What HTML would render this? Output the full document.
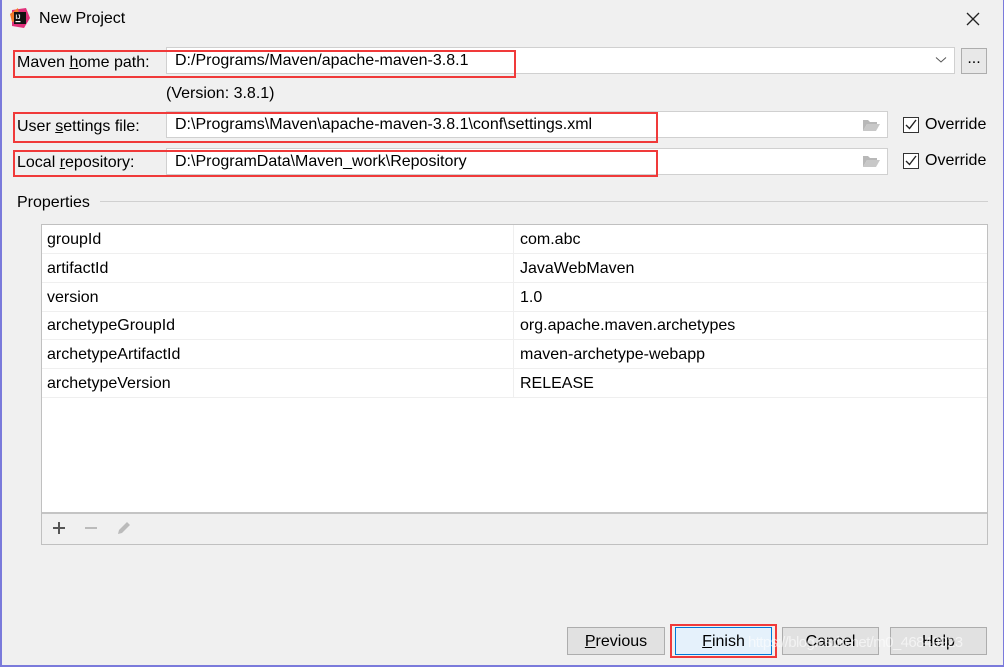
<!DOCTYPE html>
<html><head><style>
*{box-sizing:border-box;margin:0;padding:0}
body{width:1004px;height:667px;background:#f0f0f0;font-family:"Liberation Sans",sans-serif;font-size:16px;color:#000;position:relative;overflow:hidden}
.a{position:absolute}
.frame{left:0;top:0;width:1004px;height:667px;border:1px solid #7a7adb;border-top:none;border-left-width:2px;border-bottom-width:2px}
.field{background:#fff;border:1px solid #d0d0d0;height:27px;padding-left:8px;line-height:26px;white-space:nowrap}
.red{border:2px solid #f03a3a}
.lbl{line-height:20px}
.cb{width:16px;height:16px;border:1px solid #333;background:#fff}
.btn{height:28px;border:1px solid #adadad;background:#e1e1e1;text-align:center;line-height:27px}
.row{left:42px;width:945px;height:29px;border-bottom:1px solid #efefef;line-height:30px}
.row span{position:absolute;left:5px}
.row b{font-weight:normal;position:absolute;left:478px}
u{text-decoration:underline}
</style></head><body>
<div class="a frame"></div>
<svg class="a" style="left:10px;top:8px" width="20" height="20" viewBox="0 0 20 20"><polygon points="2,2 16,0 20,10 14,20 2,18" fill="#e0307a"/><polygon points="0,6 8,0 10,12 2,14" fill="#f47a2a"/><rect x="4" y="4" width="12" height="12" fill="#111"/><text x="5.5" y="11" font-size="6" fill="#fff" font-family="Liberation Sans" font-weight="bold">IJ</text><rect x="5.5" y="13" width="5" height="1.2" fill="#fff"/></svg>
<div class="a" style="left:39px;top:10px;font-size:16px">New Project</div>
<svg class="a" style="left:966px;top:12px" width="14" height="14" viewBox="0 0 14 14"><path d="M1 1L13 13M13 1L1 13" stroke="#222" stroke-width="1.3"/></svg>

<div class="a field" style="left:166px;top:47px;width:789px">D:/Programs/Maven/apache-maven-3.8.1</div>
<svg class="a" style="left:935px;top:56px" width="12" height="8"><path d="M1 1.5L6 6L11 1.5" stroke="#555" fill="none"/></svg>
<div class="a btn" style="left:961px;top:48px;width:26px;height:26px;line-height:20px;background:#e8e8e8">...</div>
<div class="a lbl" style="left:17px;top:53px">Maven <u>h</u>ome path:</div>
<div class="a red" style="left:13px;top:50px;width:503px;height:28px"></div>

<div class="a" style="left:166px;top:85px">(Version: 3.8.1)</div>

<div class="a field" style="left:166px;top:111px;width:722px">D:\Programs\Maven\apache-maven-3.8.1\conf\settings.xml</div>
<div class="a lbl" style="left:17px;top:117px">User <u>s</u>ettings file:</div>
<div class="a red" style="left:13px;top:112px;width:645px;height:31px"></div>

<div class="a field" style="left:166px;top:148px;width:722px">D:\ProgramData\Maven_work\Repository</div>
<div class="a lbl" style="left:17px;top:153px">Local <u>r</u>epository:</div>
<div class="a red" style="left:13px;top:150px;width:645px;height:27px"></div>

<svg class="a" style="left:862px;top:118px" width="18" height="14"><path d="M1 2h5l2 2h7v2H5L1 13z" fill="#b8b8b8"/><path d="M5 6h13l-4 7H1z" fill="#c8c8c8"/></svg>
<svg class="a" style="left:862px;top:154px" width="18" height="14"><path d="M1 2h5l2 2h7v2H5L1 13z" fill="#b8b8b8"/><path d="M5 6h13l-4 7H1z" fill="#c8c8c8"/></svg>

<div class="a cb" style="left:903px;top:117px"></div>
<svg class="a" style="left:903px;top:117px" width="16" height="16"><path d="M3 8l3.5 3.5L13 3" stroke="#222" stroke-width="1.4" fill="none"/></svg>
<div class="a" style="left:925px;top:116px">Override</div>
<div class="a cb" style="left:903px;top:153px"></div>
<svg class="a" style="left:903px;top:153px" width="16" height="16"><path d="M3 8l3.5 3.5L13 3" stroke="#222" stroke-width="1.4" fill="none"/></svg>
<div class="a" style="left:925px;top:152px">Override</div>

<div class="a" style="left:17px;top:194px">Properties</div>
<div class="a" style="left:100px;top:201px;width:888px;height:1px;background:#d0d0d0"></div>

<div class="a" style="left:41px;top:224px;width:947px;height:321px;border:1px solid #c0c0c0;background:#fff"></div>
<div class="a" style="left:513px;top:225px;width:1px;height:172px;background:#efefef"></div>
<div class="a row" style="top:225px"><span>groupId</span><b>com.abc</b></div>
<div class="a row" style="top:254px"><span>artifactId</span><b>JavaWebMaven</b></div>
<div class="a row" style="top:283px"><span>version</span><b>1.0</b></div>
<div class="a row" style="top:311px"><span>archetypeGroupId</span><b>org.apache.maven.archetypes</b></div>
<div class="a row" style="top:340px"><span>archetypeArtifactId</span><b>maven-archetype-webapp</b></div>
<div class="a row" style="top:369px"><span>archetypeVersion</span><b>RELEASE</b></div>
<div class="a" style="left:42px;top:512px;width:945px;height:32px;background:#f0f0f0;border-top:2px solid #c4c4c4"></div>
<svg class="a" style="left:51px;top:520px" width="16" height="16"><path d="M8 2v12M2 8h12" stroke="#555" stroke-width="2"/></svg>
<svg class="a" style="left:83px;top:520px" width="16" height="16"><path d="M2 8h12" stroke="#bbb" stroke-width="2"/></svg>
<svg class="a" style="left:115px;top:519px" width="18" height="18"><path d="M3 15l1-4 8-8 3 3-8 8z" fill="#bbb"/></svg>

<div class="a btn" style="left:567px;top:627px;width:98px"><u>P</u>revious</div>
<div class="a btn" style="left:675px;top:627px;width:97px;background:#e5f1fb;border-color:#0078d7"><u>F</u>inish</div>
<div class="a red" style="left:670px;top:624px;width:107px;height:34px"></div>
<div class="a btn" style="left:782px;top:627px;width:97px">Cancel</div>
<div class="a btn" style="left:890px;top:627px;width:97px">Help</div>
<div class="a" style="left:748px;top:634px;font-size:15px;letter-spacing:-0.6px;color:rgba(255,255,255,0.6);white-space:nowrap">https://blog.csdn.net/m0_46849923</div>
</body></html>
